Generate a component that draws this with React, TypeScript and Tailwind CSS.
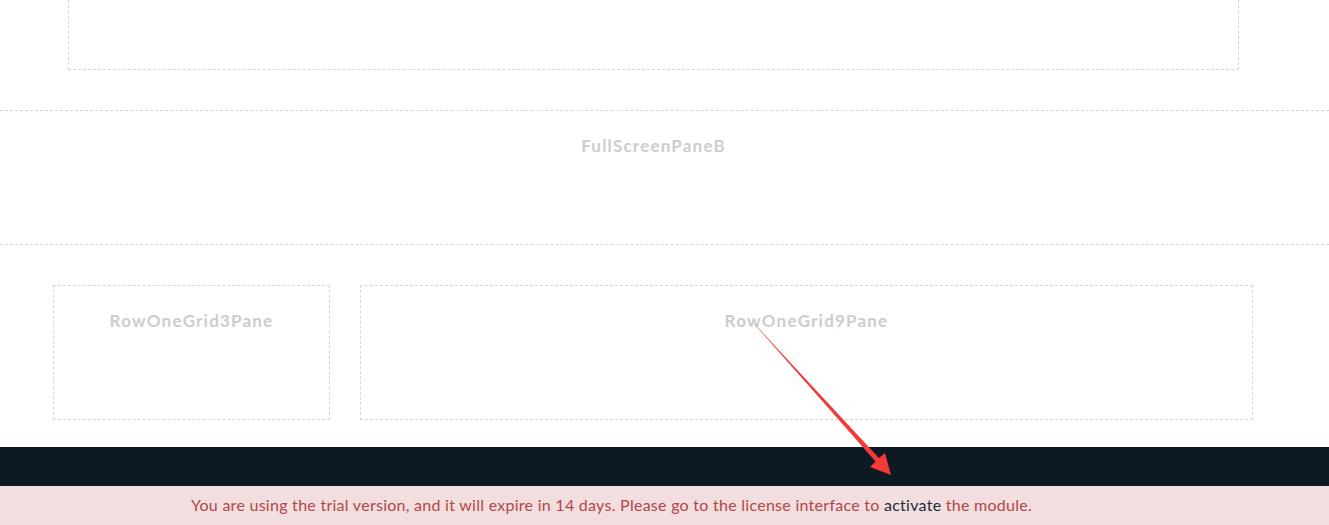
export default function App() {
  const label = "text-[17px] font-bold tracking-[1.2px] text-[#cdcdcd] text-center";
  return (
    <div className="relative w-full h-[525px] overflow-hidden bg-white font-['Lato','Open_Sans',sans-serif]">
      {/* top pane, cut off by the viewport */}
      <div className="border-b border-dashed border-[#d6d6d6] pb-[40px]">
        <div className="ml-[68px] w-[1171px] h-[70px] border-x border-b border-dashed border-[#d6d6d6]" />
      </div>

      {/* full-screen pane */}
      <div className="h-[134px] border-b border-dashed border-[#d6d6d6] pt-[22px] pr-[22px]">
        <p className={label}>FullScreenPaneB</p>
      </div>

      {/* row of panes */}
      <div className="flex gap-[30px] pl-[53px] pt-[40px] pb-[27px]">
        <div className="w-[277px] h-[135px] border border-dashed border-[#d6d6d6] pt-[22px]">
          <p className={label}>RowOneGrid3Pane</p>
        </div>
        <div className="w-[893px] h-[135px] border border-dashed border-[#d6d6d6] pt-[22px]">
          <p className={label}>RowOneGrid9Pane</p>
        </div>
      </div>

      {/* footer */}
      <div className="h-[39px] bg-[#0d1a23]" />
      <div className="h-[39px] bg-[#f2dede] flex items-center pb-[1px] pl-[191px] text-[16px] tracking-[0.27px] text-[#b0474a]">
        <span>
          You are using the trial version, and it will expire in 14 days. Please go to the license interface to{" "}
          <a className="text-[#1b2b40]">activate</a> the module.
        </span>
      </div>

      {/* annotation arrow */}
      <svg className="absolute left-0 top-0 pointer-events-none" width="1329" height="525" viewBox="0 0 1329 525">
        <polygon
          points="750,319 879,458 885,453 891,475 870,467 875.5,461.5"
          fill="#f23a3a"
        />
      </svg>
    </div>
  );
}
